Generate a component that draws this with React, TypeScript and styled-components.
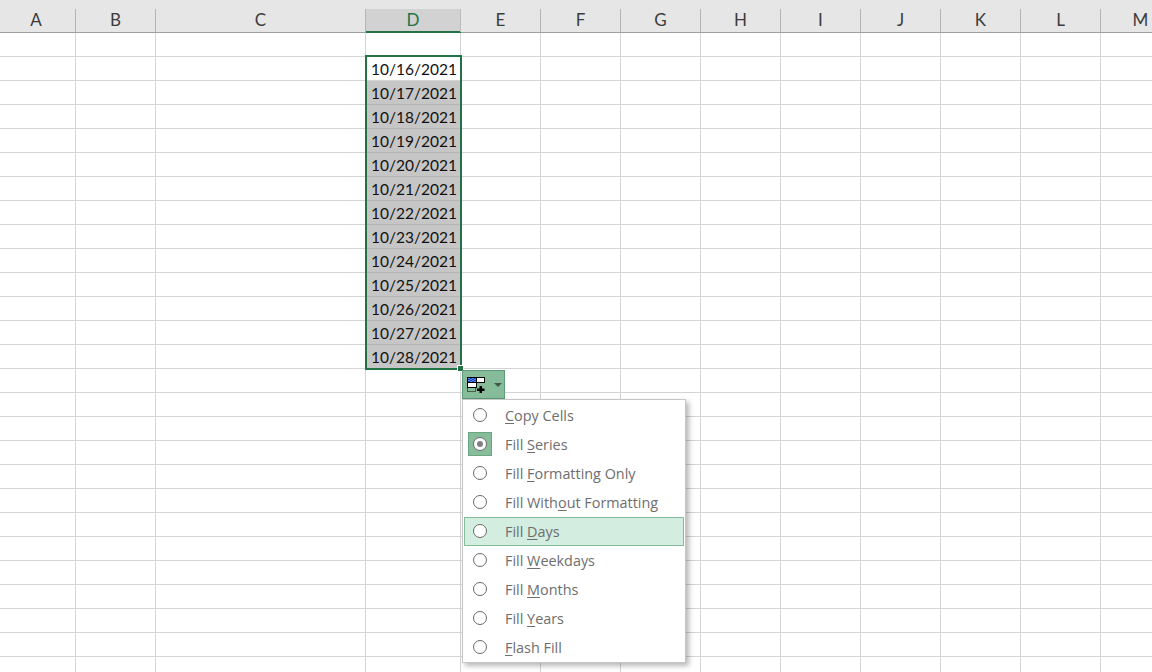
import React from "react";
import styled, { createGlobalStyle } from "styled-components";

const Global = createGlobalStyle`
  html, body { margin: 0; padding: 0; background: #fff; }
  #root { width: 1152px; height: 672px; overflow: hidden; }
`;

const COLS = "76px 80px 210px 95px 80px repeat(8, 80px)";

const Sheet = styled.div`
  position: relative;
  width: 1152px;
  height: 672px;
  overflow: hidden;
  font-family: "Lato", "Liberation Sans", sans-serif;
`;

const HeaderRow = styled.div`
  display: grid;
  grid-template-columns: ${COLS};
  width: 1181px;
  height: 33px;
  box-sizing: border-box;
  padding-top: 9px;
  background: #e6e6e6;
  border-bottom: 1px solid #9f9f9f;
`;

const HeaderCell = styled.div<{ $active?: boolean; $first?: boolean }>`
  display: flex;
  align-items: center;
  justify-content: center;
  box-sizing: border-box;
  padding-bottom: 2px;
  padding-right: ${(p) => (p.$first ? "3px" : "0")};
  font-size: 17px;
  color: ${(p) => (p.$active ? "#217346" : "#3c3c3c")};
  background: ${(p) => (p.$active ? "#d2d2d2" : "transparent")};
  border-right: 1px solid ${(p) => (p.$active ? "#bcbcbc" : "#b4b4b4")};
  box-shadow: ${(p) => (p.$active ? "inset 0 -1px 0 #217346, 0 1px 0 #217346" : "none")};
`;

const Row = styled.div`
  display: grid;
  grid-template-columns: ${COLS};
  width: 1181px;
  height: 24px;
`;

const Cell = styled.div<{ $selected?: boolean }>`
  box-sizing: border-box;
  height: 24px;
  padding-right: 3px;
  text-align: right;
  font-size: 15.5px;
  line-height: 24px;
  color: #111;
  background: ${(p) => (p.$selected ? "#c6c6c6" : "#fff")};
  border-right: 1px solid #d4d4d4;
  border-bottom: 1px solid ${(p) => (p.$selected ? "#b4b4b4" : "#d4d4d4")};
`;

const Selection = styled.div`
  position: absolute;
  left: 365px;
  top: 55px;
  width: 97px;
  height: 315px;
  box-sizing: border-box;
  border: 2px solid #217346;
  pointer-events: none;
`;

const Handle = styled.div`
  position: absolute;
  left: 458px;
  top: 366px;
  width: 5px;
  height: 5px;
  background: #217346;
  outline: 1px solid #fff;
`;

const FillButton = styled.div`
  position: absolute;
  left: 462px;
  top: 370px;
  width: 43px;
  height: 29px;
  box-sizing: border-box;
  background: #86bc99;
  border: 1px solid #5d9b78;
  display: flex;
  align-items: center;
  padding-left: 4px;
  gap: 7px;
`;

const Caret = styled.span`
  width: 0;
  height: 0;
  border-left: 4px solid transparent;
  border-right: 4px solid transparent;
  border-top: 4px solid #3f5a4a;
`;

const Menu = styled.div`
  position: absolute;
  left: 462px;
  top: 399px;
  width: 224px;
  height: 264px;
  box-sizing: border-box;
  padding: 1px 1px 0;
  background: #fff;
  border: 1px solid #c6c6c6;
  box-shadow: 3px 3px 5px rgba(0, 0, 0, 0.28);
  display: flex;
  flex-direction: column;
  font-family: "Open Sans", "Noto Sans", sans-serif;
`;

const Item = styled.div<{ $hover?: boolean }>`
  flex: 0 0 29px;
  box-sizing: border-box;
  display: flex;
  align-items: center;
  width: 220px;
  background: ${(p) => (p.$hover ? "#d3ede0" : "transparent")};
  border: 1px solid ${(p) => (p.$hover ? "#86bc99" : "transparent")};
`;

const RadioBox = styled.span<{ $checked?: boolean }>`
  width: 24px;
  height: 24px;
  margin-left: 3px;
  margin-bottom: 2px;
  box-sizing: border-box;
  display: flex;
  align-items: center;
  justify-content: center;
  background: ${(p) => (p.$checked ? "#86bc99" : "transparent")};
  border: 1px solid ${(p) => (p.$checked ? "#6aa585" : "transparent")};
`;

const Radio = styled.span<{ $checked?: boolean }>`
  width: 14px;
  height: 14px;
  box-sizing: border-box;
  border-radius: 50%;
  background: #fff;
  border: 1px solid #6a6a6a;
  display: flex;
  align-items: center;
  justify-content: center;
  &::after {
    content: "";
    display: ${(p) => (p.$checked ? "block" : "none")};
    width: 6px;
    height: 6px;
    border-radius: 50%;
    background: #808080;
  }
`;

const Label = styled.span`
  margin-left: 13px;
  font-size: 14.4px;
  line-height: 20px;
  color: #6e6e6e;
  white-space: nowrap;
`;

const Key = styled.span`
  text-decoration: underline;
  text-underline-offset: 2px;
`;

const letters = "ABCDEFGHIJKLM".split("");
const dates = Array.from({ length: 13 }, (_, i) => `10/${16 + i}/2021`);

const items: [string, string, string][] = [
  ["", "C", "opy Cells"],
  ["Fill ", "S", "eries"],
  ["Fill ", "F", "ormatting Only"],
  ["Fill With", "o", "ut Formatting"],
  ["Fill ", "D", "ays"],
  ["Fill ", "W", "eekdays"],
  ["Fill ", "M", "onths"],
  ["Fill ", "Y", "ears"],
  ["", "F", "lash Fill"],
];

const FillIcon = () => (
  <svg width="20" height="16" viewBox="0 0 20 16">
    <rect x="0.5" y="0.5" width="9" height="5" fill="#1744c8" stroke="#000" />
    <path d="M1 1h2v1H1zM5 1h2v1H5zM3 2h2v1H3zM7 2h2v1H7zM1 3h2v1H1zM5 3h2v1H5zM3 4h2v1H3zM7 4h2v1H7z" fill="#5c82e0" />
    <rect x="9.5" y="0.5" width="8" height="5" fill="#fff" stroke="#000" />
    <rect x="0.5" y="5.5" width="9" height="5" fill="#fff" stroke="#000" />
    <rect x="0.5" y="10.500" width="8" height="4" fill="none" stroke="#000" strokeDasharray="1 1" />
    <path d="M12.500 9h2.500v2.500h2.500v2.500H15V16h-2.500v-2H10v-2.500h2.500z" fill="#000" />
  </svg>
);

export default function App() {
  return (
    <Sheet>
      <Global />
      <HeaderRow>
        {letters.map((l) => (
          <HeaderCell key={l} $active={l === "D"} $first={l === "A"}>
            {l}
          </HeaderCell>
        ))}
      </HeaderRow>
      {Array.from({ length: 27 }, (_, r) => (
        <Row key={r}>
          {letters.map((l) => {
            const date = l === "D" ? dates[r - 1] : undefined;
            return (
              <Cell key={l} $selected={!!date && r > 1}>
                {date}
              </Cell>
            );
          })}
        </Row>
      ))}
      <Selection />
      <Handle />
      <FillButton>
        <FillIcon />
        <Caret />
      </FillButton>
      <Menu>
        {items.map(([pre, key, post], i) => (
          <Item key={i} $hover={i === 4}>
            <RadioBox $checked={i === 1}>
              <Radio $checked={i === 1} />
            </RadioBox>
            <Label>
              {pre}
              <Key>{key}</Key>
              {post}
            </Label>
          </Item>
        ))}
      </Menu>
    </Sheet>
  );
}
